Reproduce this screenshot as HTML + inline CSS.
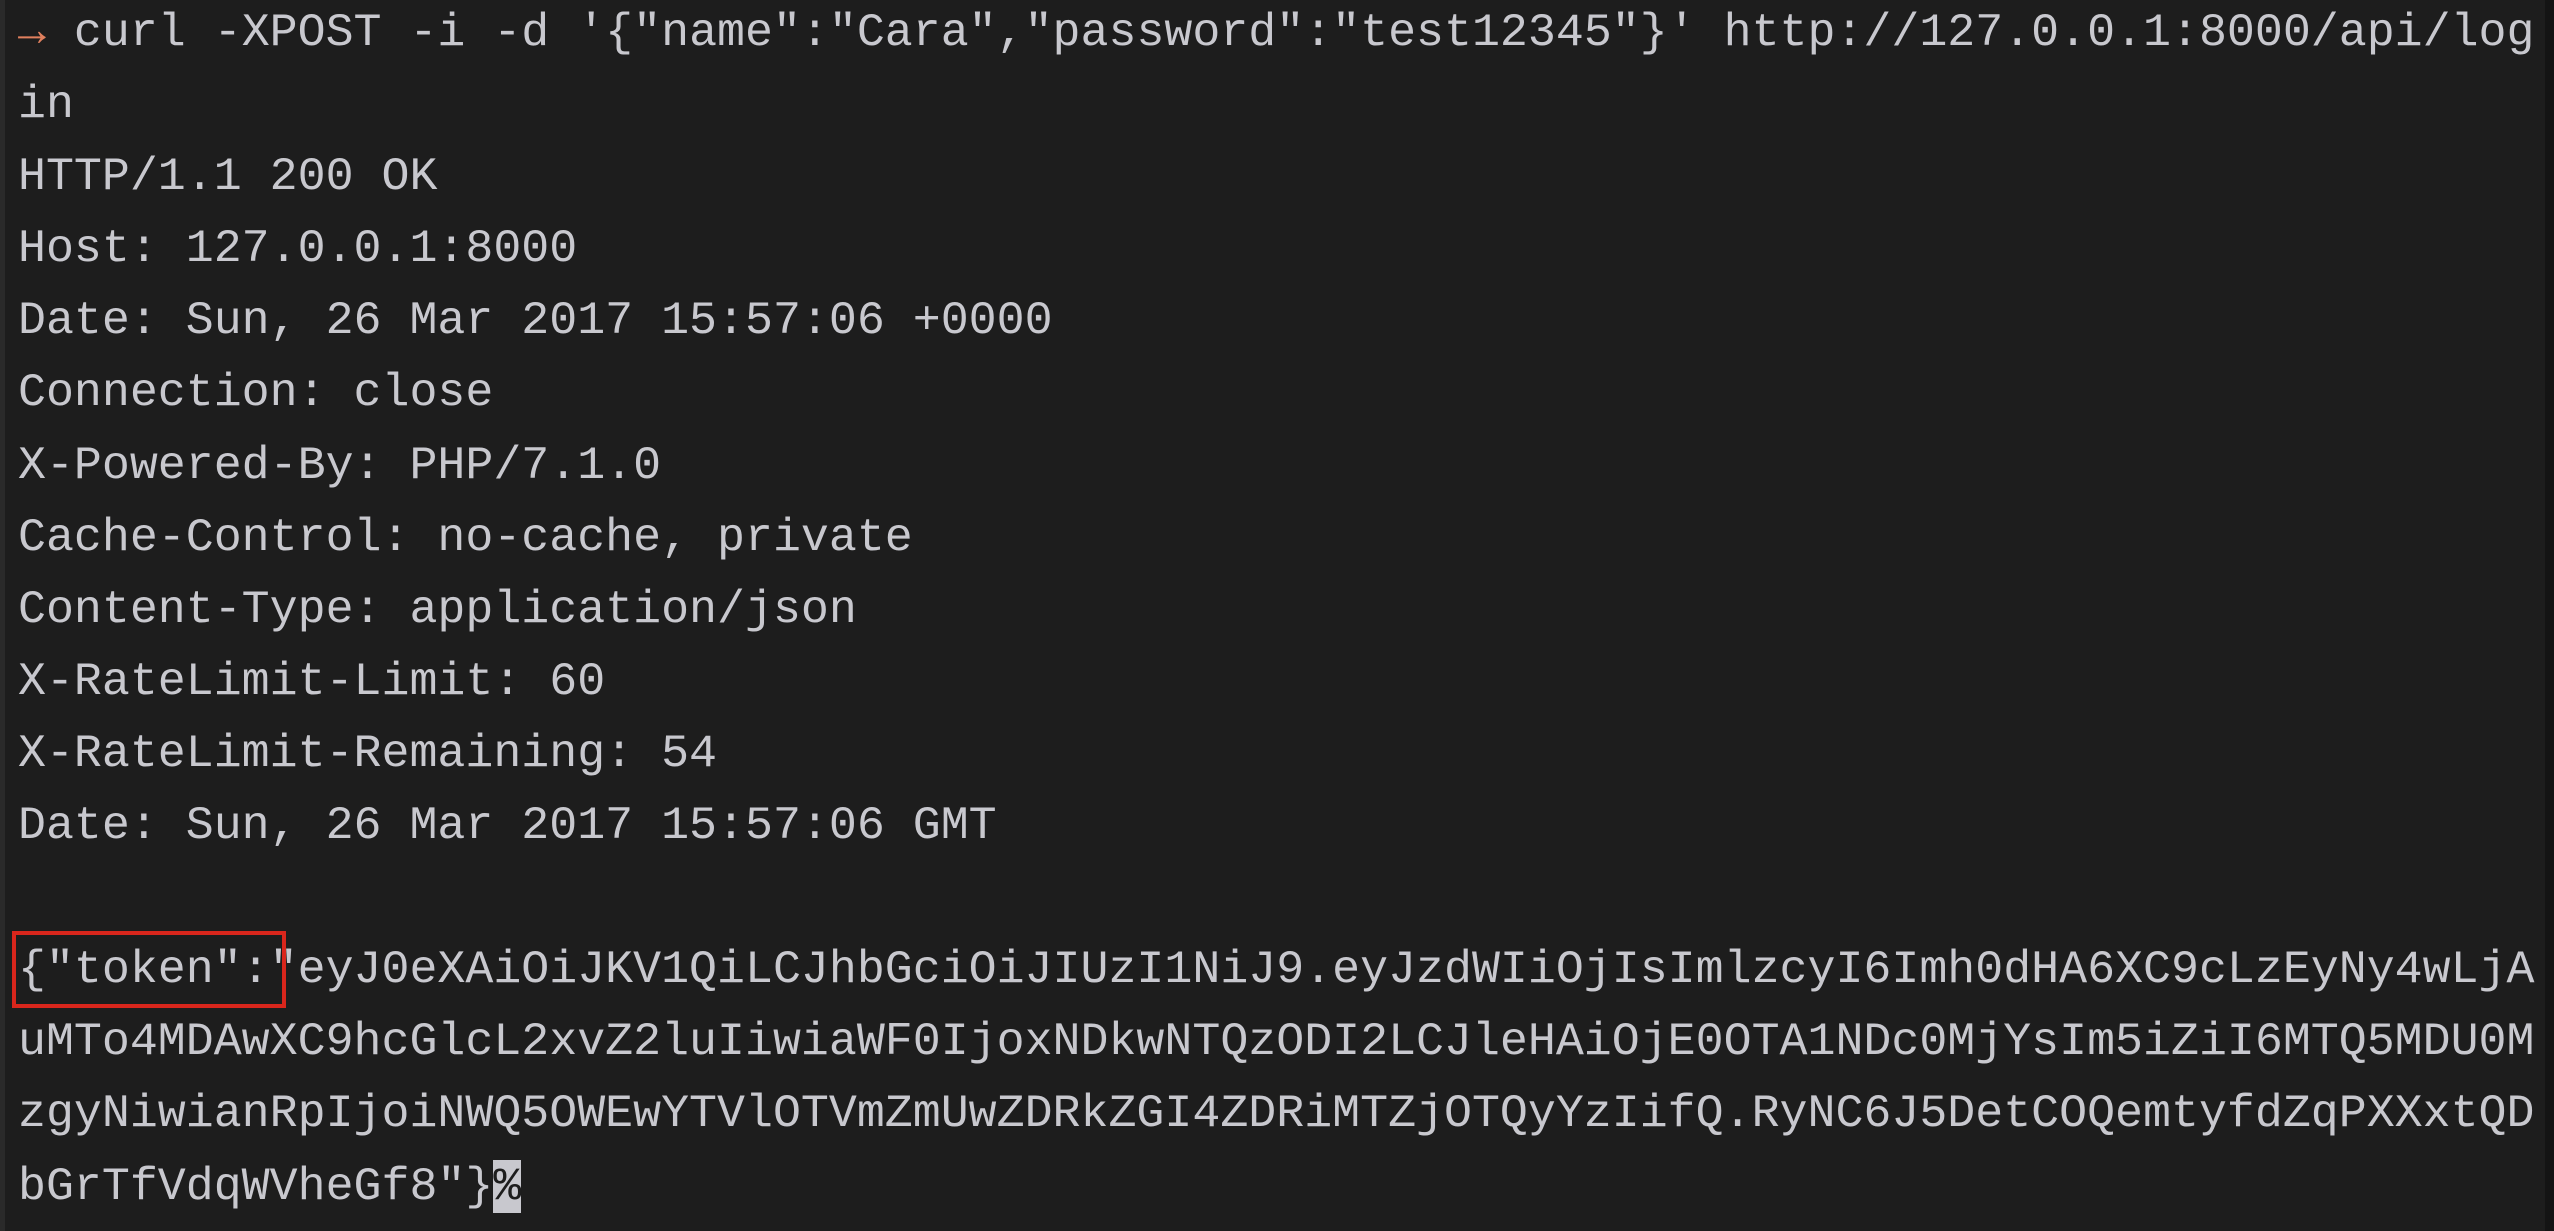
<!DOCTYPE html>
<html><head><meta charset="utf-8"><style>
html,body{margin:0;padding:0;width:2554px;height:1231px;overflow:hidden;background:#1d1d1d;}
.bar{position:absolute;left:0;top:0;width:5px;height:1231px;background:#2a2a2a;}
.rbar{position:absolute;right:0;top:0;width:9px;height:1231px;background:#141414;}
pre{position:absolute;left:18px;top:-3px;margin:0;font-family:"Liberation Mono",monospace;font-size:46.6px;line-height:72.1px;color:#c8c8ce;white-space:pre;}
.ar{color:#e0805e;font-weight:bold;}
.box{position:absolute;left:12px;top:931px;width:266px;height:69px;border:4px solid #d9261c;}
.cur{background:#c8c8ce;color:#1d1d1d;}
</style></head><body>
<div class="bar"></div><div class="rbar"></div>
<pre><span class="ar">→</span> curl -XPOST -i -d '{"name":"Cara","password":"test12345"}' http://127.0.0.1:8000/api/log
in
HTTP/1.1 200 OK
Host: 127.0.0.1:8000
Date: Sun, 26 Mar 2017 15:57:06 +0000
Connection: close
X-Powered-By: PHP/7.1.0
Cache-Control: no-cache, private
Content-Type: application/json
X-RateLimit-Limit: 60
X-RateLimit-Remaining: 54
Date: Sun, 26 Mar 2017 15:57:06 GMT

{"token":"eyJ0eXAiOiJKV1QiLCJhbGciOiJIUzI1NiJ9.eyJzdWIiOjIsImlzcyI6Imh0dHA6XC9cLzEyNy4wLjA
uMTo4MDAwXC9hcGlcL2xvZ2luIiwiaWF0IjoxNDkwNTQzODI2LCJleHAiOjE0OTA1NDc0MjYsIm5iZiI6MTQ5MDU0M
zgyNiwianRpIjoiNWQ5OWEwYTVlOTVmZmUwZDRkZGI4ZDRiMTZjOTQyYzIifQ.RyNC6J5DetCOQemtyfdZqPXXxtQD
bGrTfVdqWVheGf8"}<span class="cur">%</span></pre>
<div class="box"></div>
</body></html>
